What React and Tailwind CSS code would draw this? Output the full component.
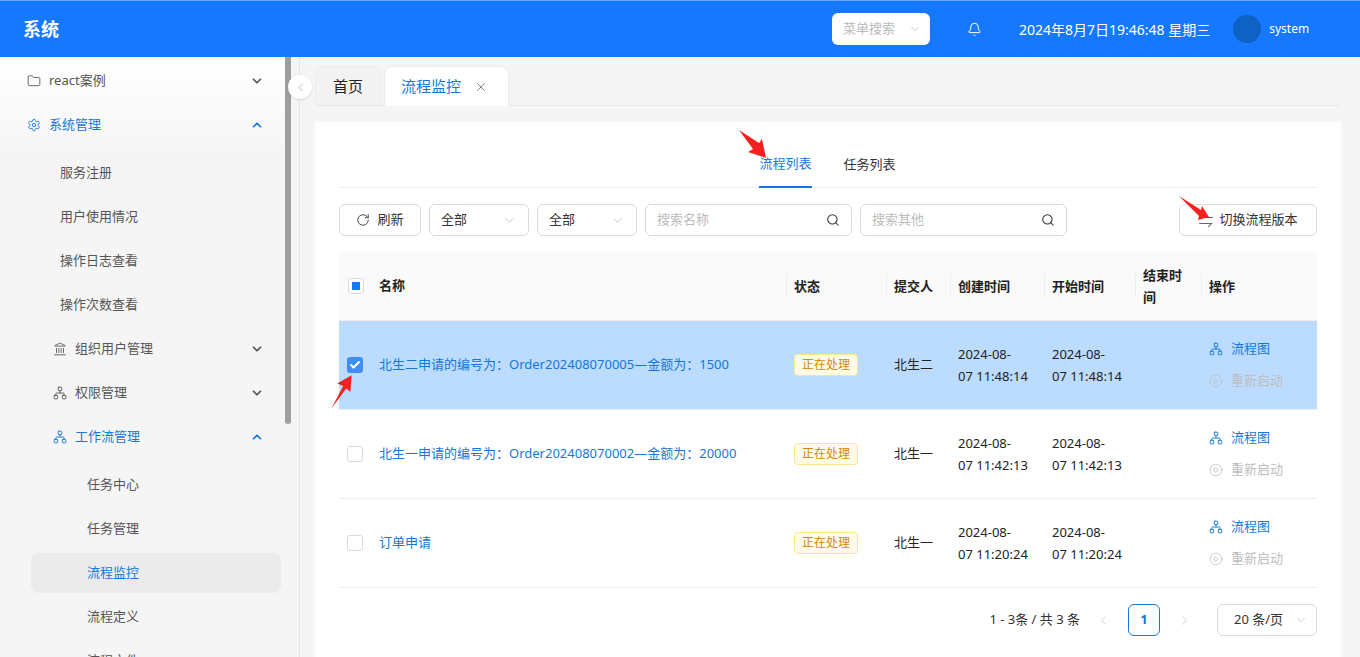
import { Bell, ChevronDown, ChevronUp, ChevronLeft, ChevronRight, Folder, Settings, Landmark, Network, RotateCw, Search, X, CirclePlay, Check } from 'lucide-react'

const FONT = { fontFamily: '"Noto Sans", "Noto Sans CJK SC", sans-serif' }

const ROWS = [
  { name: '北生二申请的编号为：Order202408070005—金额为：1500', user: '北生二', time: ['2024-08-', '07 11:48:14'], checked: true },
  { name: '北生一申请的编号为：Order202408070002—金额为：20000', user: '北生一', time: ['2024-08-', '07 11:42:13'] },
  { name: '订单申请', user: '北生一', time: ['2024-08-', '07 11:20:24'] },
]

function MenuItem({ icon: Icon, label, open, active, indent = 'pl-[27px]', gap = 'gap-[8px]', h = 'h-[44px]', chevron = true }) {
  return (
    <div className={`flex items-center ${h} ${indent} pr-[21px] text-[13px] ${active ? 'text-[#1677d9]' : 'text-[#555]'}`}>
      <div className={`flex items-center ${gap} flex-1`}>
        {Icon && <Icon size={14} strokeWidth={1.5} />}
        <span>{label}</span>
      </div>
      {chevron && (open ? <ChevronUp size={14} strokeWidth={3} /> : <ChevronDown size={14} strokeWidth={3} />)}
    </div>
  )
}

function SubItem({ label, active, indent = 'pl-[60px]' }) {
  return (
    <div className={`flex items-center h-[44px] ${indent} text-[13px] text-[#555]`}>
      <span className={active ? 'text-[#1677d9]' : ''}>{label}</span>
    </div>
  )
}

function Select({ w, label }) {
  return (
    <div className={`flex items-center justify-between ${w} h-[32px] border border-[#dcdcdc] rounded-[6px] pl-[11px] pr-[11px] text-[13px] text-[#333]`}>
      <span>{label}</span>
      <ChevronDown size={15} strokeWidth={1} className="text-[#aaa]" />
    </div>
  )
}

function SearchBox({ placeholder }) {
  return (
    <div className="flex items-center justify-between w-[207px] h-[32px] border border-[#dcdcdc] rounded-[6px] pl-[11px] pr-[11px] text-[13px] text-[#bbb]">
      <span>{placeholder}</span>
      <Search size={14} strokeWidth={1.8} className="text-[#333]" />
    </div>
  )
}

function Checkbox({ checked }) {
  if (checked) {
    return (
      <div className="w-[16px] h-[16px] rounded-[3px] bg-[#3f8ef5] flex items-center justify-center">
        <Check size={12} strokeWidth={4} className="text-white" />
      </div>
    )
  }
  return <div className="w-[16px] h-[16px] rounded-[3px] border border-[#d9d9d9] bg-white" />
}

function HeadCell({ children, className = '' }) {
  return (
    <th className={`relative text-left font-bold text-[13px] text-[#222] leading-[22px] px-[8px] ${className}`}>
      <span className="absolute left-0 top-[21px] h-[24px] w-px bg-[#eeeeee]" />
      {children}
    </th>
  )
}

function Arrow({ className, d }) {
  return (
    <svg className={`absolute pointer-events-none ${className}`} viewBox="0 0 60 60" fill="#f5211f">
      <path d={d} />
    </svg>
  )
}

export default function App() {
  return (
    <div className="relative w-[1360px] h-[657px] overflow-hidden bg-[#f5f5f5] flex flex-col" style={FONT}>
      <header className="h-[57px] shrink-0 bg-[#1677ff] border-t border-[#6aa5f5] flex items-center text-white">
        <div className="pl-[23px] text-[18px] font-bold w-[832px]">系统</div>
        <div className="flex items-center justify-between w-[98px] h-[32px] bg-white rounded-[6px] pl-[11px] pr-[8px] text-[13px] text-[#bbb]">
          <span>菜单搜索</span>
          <ChevronDown size={14} strokeWidth={1} className="text-[#aaa]" />
        </div>
        <Bell size={15} strokeWidth={1.6} className="ml-[37px]" />
        <span className="ml-[37px] text-[14px] whitespace-nowrap">2024年8月7日19:46:48 星期三</span>
        <div className="ml-[23px] w-[28px] h-[28px] rounded-full bg-[#0e62c4]" />
        <span className="ml-[8px] text-[12px]">system</span>
      </header>

      <div className="flex flex-1 min-h-0">
        <aside className="w-[285px] shrink-0 overflow-hidden bg-gradient-to-b from-white to-[#f5f5f5] to-[100px]">
          <div className="h-[2px]" />
          <MenuItem icon={Folder} label="react案例" />
          <MenuItem icon={Settings} label="系统管理" open active />
          <div className="h-[4px]" />
          <SubItem label="服务注册" />
          <SubItem label="用户使用情况" />
          <SubItem label="操作日志查看" />
          <SubItem label="操作次数查看" />
          <MenuItem icon={Landmark} label="组织用户管理" indent="pl-[53px]" />
          <MenuItem icon={Network} label="权限管理" indent="pl-[53px]" />
          <MenuItem icon={Network} label="工作流管理" open active indent="pl-[53px]" />
          <div className="h-[4px]" />
          <SubItem label="任务中心" indent="pl-[87px]" />
          <SubItem label="任务管理" indent="pl-[87px]" />
          <div className="ml-[31px] mr-[4px] h-[40px] my-[2px] rounded-[8px] bg-[#ebebeb] flex items-center pl-[56px] text-[13px] text-[#1677d9]">流程监控</div>
          <SubItem label="流程定义" indent="pl-[87px]" />
          <SubItem label="流程文件" indent="pl-[87px]" />
        </aside>

        <div className="w-[15px] shrink-0 border-r border-[#e4e4e4]">
          <div className="w-[6px] h-[367px] bg-[#9e9e9e] rounded-b-[3px]" />
        </div>

        <main className="flex-1 min-w-0 pl-[15px] pr-[19px] pt-[9px]">
          <div className="flex items-end gap-[3px] h-[40px] border-b border-[#e8e8e8] text-[15px]">
            <div className="w-[66px] h-[39px] flex items-center justify-center border border-b-0 border-[#ececec] rounded-t-[8px] bg-[#f3f3f3] text-[#222]">首页</div>
            <div className="w-[125px] h-[40px] -mb-px flex items-center gap-[13px] pl-[16px] border border-b-0 border-[#ececec] rounded-t-[8px] bg-white text-[#1677d9]">
              <span>流程监控</span>
              <X size={14} strokeWidth={1.5} className="text-[#777]" />
            </div>
          </div>

          <section className="mt-[16px] h-[540px] bg-white px-[24px] overflow-hidden">
            <div className="h-[66px] border-b border-[#eeeeee] flex justify-center gap-[32px] text-[13px]">
              <div className="ml-[-1px] flex items-center pt-[20px] border-b-2 border-[#1677d9] text-[#1677d9] h-[66px]">流程列表</div>
              <div className="flex items-center pt-[20px] text-[#333]">任务列表</div>
            </div>

            <div className="mt-[16px] flex items-center gap-[8px]">
              <div className="flex items-center justify-center gap-[7px] w-[82px] h-[32px] border border-[#dcdcdc] rounded-[6px] text-[13px] text-[#333]">
                <RotateCw size={14} strokeWidth={1.5} />
                <span>刷新</span>
              </div>
              <Select w="w-[100px]" label="全部" />
              <Select w="w-[100px]" label="全部" />
              <SearchBox placeholder="搜索名称" />
              <SearchBox placeholder="搜索其他" />
              <div className="ml-auto flex items-center justify-center gap-[6px] w-[138px] h-[32px] border border-[#dcdcdc] rounded-[6px] text-[13px] text-[#333]">
                <span className="text-[15px] text-[#666] leading-none">⇋</span>
                <span>切换流程版本</span>
              </div>
            </div>

            <table className="mt-[16px] w-[978px] table-fixed border-collapse">
              <colgroup>
                <col className="w-[32px]" />
                <col className="w-[415px]" />
                <col className="w-[100px]" />
                <col className="w-[64px]" />
                <col className="w-[94px]" />
                <col className="w-[91px]" />
                <col className="w-[66px]" />
                <col className="w-[116px]" />
              </colgroup>
              <thead>
                <tr className="h-[68px] bg-[#fafafa]">
                  <th className="pl-[9px] rounded-tl-[8px]">
                    <div className="w-[16px] h-[16px] rounded-[3px] border border-[#d9d9d9] bg-white flex items-center justify-center">
                      <div className="w-[8px] h-[8px] bg-[#1677ff]" />
                    </div>
                  </th>
                  <th className="text-left font-bold text-[13px] text-[#222] px-[8px]">名称</th>
                  <HeadCell>状态</HeadCell>
                  <HeadCell>提交人</HeadCell>
                  <HeadCell>创建时间</HeadCell>
                  <HeadCell>开始时间</HeadCell>
                  <HeadCell>结束时间</HeadCell>
                  <HeadCell className="rounded-tr-[8px]">操作</HeadCell>
                </tr>
              </thead>
              <tbody>
                {ROWS.map(r => (
                  <tr key={r.name} className={`h-[89px] border-t border-[#eeeeee] text-[13px] ${r.checked ? 'bg-[#bbdcfe]' : 'bg-white'}`}>
                    <td className="pl-[8px]"><Checkbox checked={r.checked} /></td>
                    <td className="px-[8px] text-[#1677d9] whitespace-nowrap">{r.name}</td>
                    <td className="px-[8px]">
                      <span className="inline-block h-[22px] leading-[20px] px-[7px] border border-[#ffe58f] rounded-[4px] bg-[#fffbe6] text-[12px] text-[#d48806]">正在处理</span>
                    </td>
                    <td className="px-[8px] text-[#222] whitespace-nowrap">{r.user}</td>
                    <td className="px-[8px] text-[#222] leading-[22px] whitespace-nowrap">{r.time[0]}<br />{r.time[1]}</td>
                    <td className="px-[8px] text-[#222] leading-[22px] whitespace-nowrap">{r.time[0]}<br />{r.time[1]}</td>
                    <td />
                    <td className="px-[8px]">
                      <div className="flex items-center gap-[8px] h-[22px] mb-[10px] text-[#1677d9]">
                        <Network size={14} strokeWidth={1.6} />
                        <span>流程图</span>
                      </div>
                      <div className="flex items-center gap-[8px] h-[22px] text-[#bdbdbd]">
                        <CirclePlay size={14} strokeWidth={1.3} />
                        <span>重新启动</span>
                      </div>
                    </td>
                  </tr>
                ))}
              </tbody>
            </table>

            <div className="border-t border-[#eeeeee] pt-[16px] flex items-center justify-end text-[13px] text-[#333]">
              <span>1 - 3条 / 共 3 条</span>
              <ChevronLeft size={15} strokeWidth={1.2} className="ml-[16px] text-[#bbb]" />
              <div className="ml-[17px] w-[32px] h-[32px] border border-[#1677d9] rounded-[6px] flex items-center justify-center font-bold text-[#1677d9]">1</div>
              <ChevronRight size={15} strokeWidth={1.2} className="ml-[17px] text-[#bbb]" />
              <div className="ml-[25px] flex items-center justify-between w-[100px] h-[32px] border border-[#dcdcdc] rounded-[6px] pl-[16px] pr-[8px]">
                <span>20 条/页</span>
                <ChevronDown size={14} strokeWidth={1} className="text-[#aaa]" />
              </div>
            </div>
          </section>
        </main>
      </div>

      {/* collapse button over the divider */}
      <div className="absolute left-[288px] top-[75px] w-[24px] h-[24px] rounded-full bg-white shadow-sm flex items-center justify-center">
        <ChevronLeft size={13} strokeWidth={1.5} className="text-[#aaa]" />
      </div>

      {/* red annotation arrows */}
      <Arrow className="left-[738px] top-[129px] w-[30px] h-[30px]" d="M2 2 L42 28 L48 20 L56 58 L20 46 L30 40 Z" />
      <Arrow className="left-[1166px] top-[195px] w-[56px] h-[30px]" d="M0 2 L44 30 L46 22 L60 44 L38 50 L40 42 Z" />
      <Arrow className="left-[330px] top-[374px] w-[36px] h-[36px]" d="M2 58 L22 20 L12 16 L36 2 L34 30 L27 24 Z" />
    </div>
  )
}
